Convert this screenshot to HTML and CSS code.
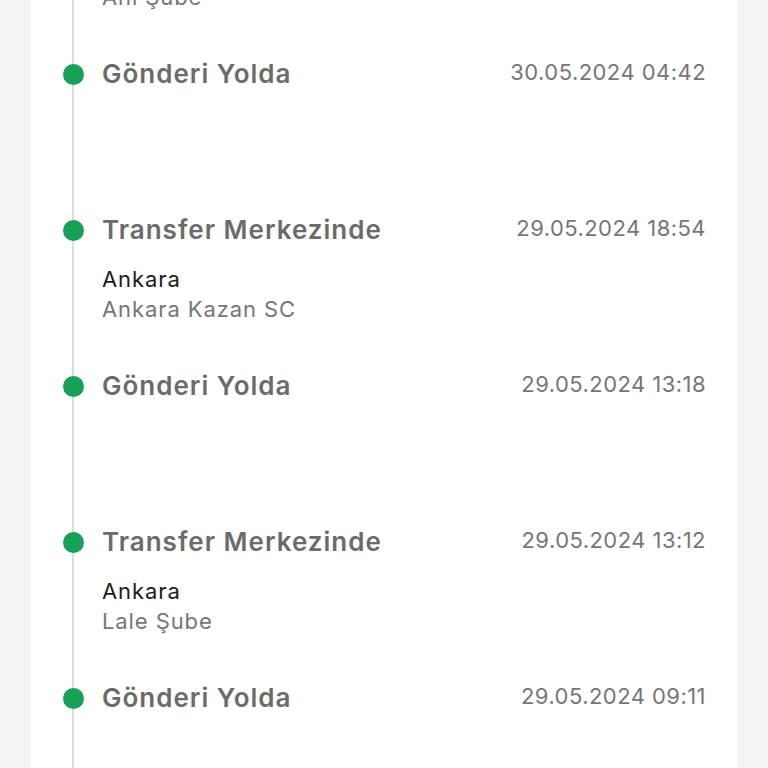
FILE: index.html
```html
<!DOCTYPE html>
<html lang="tr">
<head>
    <meta charset="UTF-8">
    <meta name="viewport" content="width=device-width, initial-scale=1.0">
    <title>Gönderi Hareketleri</title>
    <link rel="stylesheet" href="styles.css">
</head>
<body>

    <main class="card">
        <ol class="timeline">
            <li class="timeline__item">
                <div class="timeline__head">
                    <span class="timeline__title">Transfer Merkezinde</span>
                    <span class="timeline__date">30.05.2024 01:10</span>
                </div>
                <p class="timeline__city">Ankara</p>
                <p class="timeline__branch">Anı Şube</p>
            </li>
            <li class="timeline__item">
                <div class="timeline__head">
                    <span class="timeline__title">Gönderi Yolda</span>
                    <span class="timeline__date">30.05.2024 04:42</span>
                </div>
            </li>
            <li class="timeline__item">
                <div class="timeline__head">
                    <span class="timeline__title">Transfer Merkezinde</span>
                    <span class="timeline__date">29.05.2024 18:54</span>
                </div>
                <p class="timeline__city">Ankara</p>
                <p class="timeline__branch">Ankara Kazan SC</p>
            </li>
            <li class="timeline__item">
                <div class="timeline__head">
                    <span class="timeline__title">Gönderi Yolda</span>
                    <span class="timeline__date">29.05.2024 13:18</span>
                </div>
            </li>
            <li class="timeline__item">
                <div class="timeline__head">
                    <span class="timeline__title">Transfer Merkezinde</span>
                    <span class="timeline__date">29.05.2024 13:12</span>
                </div>
                <p class="timeline__city">Ankara</p>
                <p class="timeline__branch">Lale Şube</p>
            </li>
            <li class="timeline__item">
                <div class="timeline__head">
                    <span class="timeline__title">Gönderi Yolda</span>
                    <span class="timeline__date">29.05.2024 09:11</span>
                </div>
            </li>
        </ol>
    </main>

</body>
</html>
```

FILE: styles.css
```css
/* Shipment tracking timeline */
:root {
    --color-page: #f3f4f6;
    --color-card: #ffffff;
    --color-line: #dcdcdc;
    --color-dot: #16a058;
    --color-title: #6b6b6b;
    --color-muted: #767676;
    --color-text: #1c1c1c;

    --font-sans: Inter, "Noto Sans", "Liberation Sans", sans-serif;
    --item-height: 156px;
    --dot-size: 21px;
}

*,
*::before,
*::after {
    box-sizing: border-box;
}

html, body {
    height: 100%;
}

body {
    margin: 0;
    padding: 0 31px;
    overflow: hidden;
    font-family: var(--font-sans);
    background: var(--color-page);
    color: var(--color-text);
}

.card {
    min-height: 100%;
    background: var(--color-card);
}

/* the list is scrolled: the first entry sits above the viewport */
.timeline {
    list-style: none;
    margin: -99px 0 0 41px;
    padding: 0 31px 0 0;
    border-left: 2px solid var(--color-line);
}

.timeline__item {
    position: relative;
    height: var(--item-height);
    padding-left: 28px;
}

/* dot sits over the connector line */
.timeline__item::before {
    content: "";
    position: absolute;
    left: -11.5px;
    top: 6.5px;
    width: var(--dot-size);
    height: var(--dot-size);
    border-radius: 50%;
    background: var(--color-dot);
}

.timeline__head {
    display: flex;
    justify-content: space-between;
    align-items: flex-start;
}

.timeline__title {
    font-size: 26px;
    line-height: 34px;
    font-weight: 600;
    letter-spacing: 1px;
    color: var(--color-title);
}

.timeline__date {
    font-size: 22px;
    line-height: 30px;
    letter-spacing: 0.45px;
    color: var(--color-muted);
}

.timeline__city,
.timeline__branch {
    margin: 0;
    font-size: 22px;
    line-height: 30px;
    letter-spacing: 0.9px;
}

.timeline__city {
    margin-top: 17px;
    color: var(--color-text);
}

.timeline__branch {
    color: var(--color-muted);
}
```
